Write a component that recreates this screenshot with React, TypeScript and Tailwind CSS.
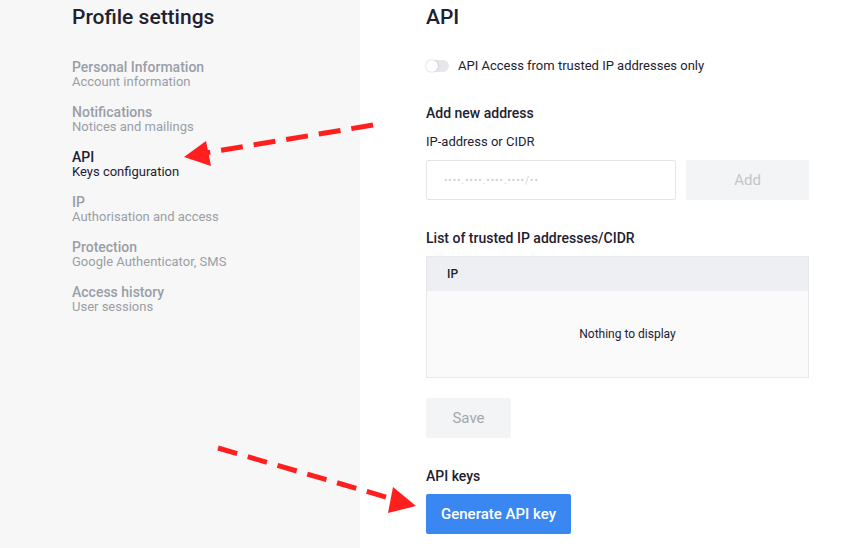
import { useState } from "react";

const NAV = [
  { title: "Personal Information", sub: "Account information" },
  { title: "Notifications", sub: "Notices and mailings" },
  { title: "API", sub: "Keys configuration", active: true },
  { title: "IP", sub: "Authorisation and access" },
  { title: "Protection", sub: "Google Authenticator, SMS" },
  { title: "Access history", sub: "User sessions" },
];

function Arrows() {
  return (
    <svg
      className="pointer-events-none absolute left-0 top-0"
      width="858"
      height="548"
      viewBox="0 0 858 548"
    >
      <line x1="373" y1="125" x2="205" y2="153" stroke="#ff1f1f" strokeWidth="5" strokeDasharray="22 11" />
      <polygon points="184,157 206,141 211,166" fill="#ff1f1f" />
      <line x1="218" y1="448" x2="396" y2="500" stroke="#ff1f1f" strokeWidth="5" strokeDasharray="20 11" />
      <polygon points="416,506 393,487 388,513" fill="#ff1f1f" />
    </svg>
  );
}

export default function App() {
  const [trusted, setTrusted] = useState(false);

  return (
    <div className="relative flex h-[548px] w-[858px] overflow-hidden bg-white font-['Roboto',sans-serif] text-[#1e2130]">
      <aside className="flex w-[360px] shrink-0 flex-col bg-[#f7f7f7] pl-[72px] pt-[3px]">
        <h1 className="text-[21px] font-medium leading-[28px]">Profile settings</h1>
        <nav className="mt-[29px] flex flex-col gap-[17px]">
          {NAV.map((item) => (
            <div key={item.title} className={item.active ? "text-[#1e2130]" : "text-[#9a9ea6]"}>
              <p className="text-[14px] font-medium leading-[15px]">{item.title}</p>
              <p className="text-[13px] leading-[13px]">{item.sub}</p>
            </div>
          ))}
        </nav>
      </aside>

      <main className="flex w-[449px] flex-col pl-[66px] pt-[3px]">
        <h2 className="text-[21px] font-medium leading-[28px]">API</h2>

        <label className="mt-[27px] flex h-4 items-center gap-[9px] text-[13px]">
          <button
            onClick={() => setTrusted(!trusted)}
            className="relative h-[12px] w-[23px] rounded-full bg-[#e6e7ea]"
          >
            <span className="absolute left-0 top-0 h-[12px] w-[12px] rounded-full bg-white shadow-[0_0_2px_rgba(0,0,0,0.25)]" />
          </button>
          API Access from trusted IP addresses only
        </label>

        <h3 className="mt-[29px] text-[14px] font-medium leading-[20px]">Add new address</h3>
        <p className="mt-[10px] text-[13px] leading-[18px]">IP-address or CIDR</p>
        <div className="mt-[9px] flex gap-[10px]">
          <input
            className="h-10 w-[250px] rounded-[2px] border border-[#e4e5e8] px-[17px] text-[10px] tracking-[1px] outline-none placeholder:text-[#cdd0d4]"
            placeholder="••••.••••.••••.••••/••"
          />
          <button className="h-10 w-[123px] rounded-[2px] bg-[#f3f4f5] text-[15px] text-[#c3c6cb]">Add</button>
        </div>

        <h3 className="mt-[28px] text-[14px] font-medium leading-[20px]">List of trusted IP addresses/CIDR</h3>
        <div className="mt-[8px] w-[383px] border border-[#e8e9ec]">
          <div className="flex h-[34px] items-center bg-[#eeeff2] pl-[20px] text-[12px] font-medium">IP</div>
          <div className="flex h-[86px] items-center justify-center bg-[#fafafa] pl-[20px] text-[12px]">
            Nothing to display
          </div>
        </div>

        <button className="mt-[20px] h-10 w-[85px] rounded-[2px] bg-[#f3f4f5] text-[15px] text-[#a3a7ad]">Save</button>

        <h3 className="mt-[28px] text-[14px] font-medium leading-[20px]">API keys</h3>
        <button className="mt-[8px] h-10 w-[145px] rounded-[2px] bg-[#3a87f2] text-[15px] font-medium text-white">
          Generate API key
        </button>
      </main>

      <Arrows />
    </div>
  );
}
